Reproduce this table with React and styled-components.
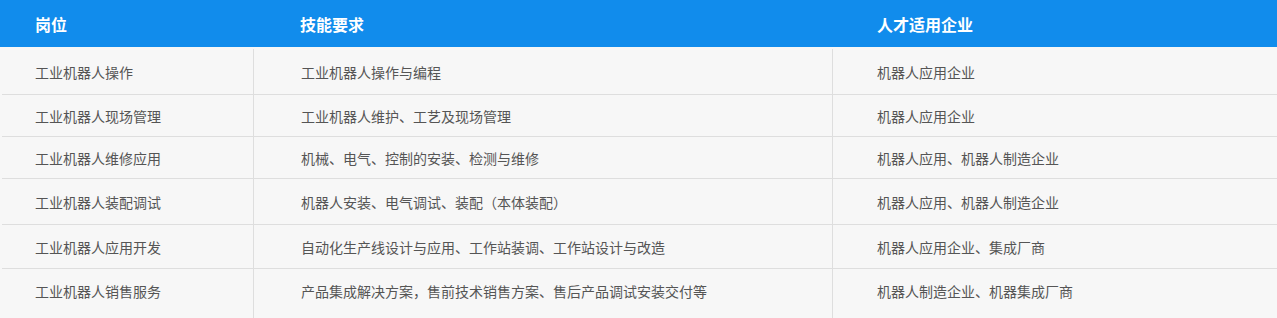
import React from "react";
import styled, { createGlobalStyle } from "styled-components";

const Global = createGlobalStyle`
  html, body { margin: 0; padding: 0; background: #f7f7f7; }
  body { font-family: "Microsoft YaHei", "Noto Sans CJK SC", "Noto Sans", sans-serif; }
`;

const Table = styled.div`
  width: 1277px;
  background: #f7f7f7;
`;

const Head = styled.div`
  display: grid;
  grid-template-columns: 254px 579px 1fr;
  height: 47px;
  background: #118cec;
  color: #fff;
  font-size: 16px;
  font-weight: 700;
  align-items: center;
`;

const HeadCell = styled.div`
  padding-left: ${(p) => p.$pad}px;
`;

const Body = styled.div`
  padding: 2px 0 0 2px;
`;

const Row = styled.div`
  display: grid;
  grid-template-columns: 252px 579px 1fr;
  height: ${(p) => p.$h}px;
  border-bottom: ${(p) => (p.$last ? "none" : "1px solid #dedede")};
  box-sizing: border-box;
`;

const Cell = styled.div`
  display: flex;
  align-items: center;
  box-sizing: border-box;
  padding-left: ${(p) => p.$pad}px;
  padding-bottom: ${(p) => p.$pb || 0}px;
  font-size: 14px;
  color: #555;
  border-right: ${(p) => (p.$line ? "1px solid #dedede" : "none")};
  white-space: nowrap;
`;

const rows = [
  ["工业机器人操作", "工业机器人操作与编程", "机器人应用企业", 46],
  ["工业机器人现场管理", "工业机器人维护、工艺及现场管理", "机器人应用企业", 42],
  ["工业机器人维修应用", "机械、电气、控制的安装、检测与维修", "机器人应用、机器人制造企业", 42],
  ["工业机器人装配调试", "机器人安装、电气调试、装配（本体装配）", "机器人应用、机器人制造企业", 46],
  ["工业机器人应用开发", "自动化生产线设计与应用、工作站装调、工作站设计与改造", "机器人应用企业、集成厂商", 44],
  ["工业机器人销售服务", "产品集成解决方案，售前技术销售方案、售后产品调试安装交付等", "机器人制造企业、机器集成厂商", 50],
];

export default function App() {
  return (
    <>
      <Global />
      <Table>
        <Head>
          <HeadCell $pad={35}>岗位</HeadCell>
          <HeadCell $pad={46}>技能要求</HeadCell>
          <HeadCell $pad={44}>人才适用企业</HeadCell>
        </Head>
        <Body>
          {rows.map(([a, b, c, h], i) => {
            const last = i === rows.length - 1;
            const pb = last ? 6 : 0;
            return (
              <Row key={i} $h={h} $last={last}>
                <Cell $pad={33} $pb={pb} $line>{a}</Cell>
                <Cell $pad={47} $pb={pb} $line>{b}</Cell>
                <Cell $pad={44} $pb={pb}>{c}</Cell>
              </Row>
            );
          })}
        </Body>
      </Table>
    </>
  );
}
